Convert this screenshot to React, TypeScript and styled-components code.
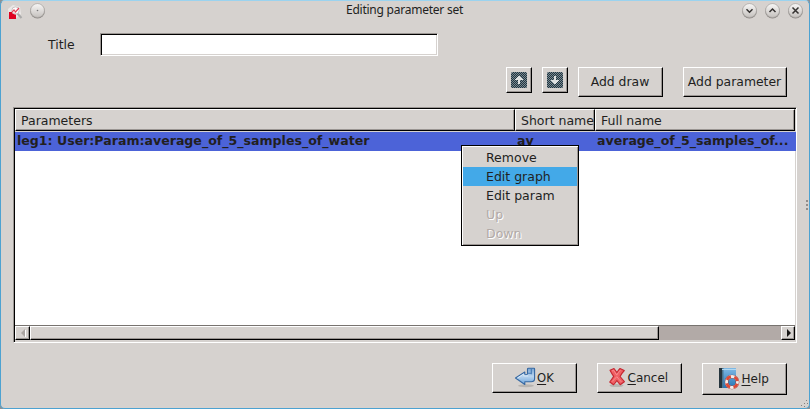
import React from "react";
import styled, { createGlobalStyle, css } from "styled-components";

const Global = createGlobalStyle`
  * { box-sizing: border-box; }
  html, body { margin: 0; background: #8b9297; overflow: hidden; }
  body { font: 13px/19px "DejaVu Sans", sans-serif; color: #221f1e; }
`;

const face = "#d6d2cf";
const shade = "#9b9693";

const raised = css`
  background: ${face};
  border: 1px solid #fff;
  border-right-color: #000;
  border-bottom-color: #000;
  box-shadow: inset -1px -1px ${shade};
`;

const Window = styled.main`
  position: relative;
  display: flex;
  flex-direction: column;
  width: 810px;
  height: 409px;
  background: ${face};
  border: 1px solid #4da2d1;
  border-top-color: #9bd3ef;
  border-radius: 5px;
`;

const TitleBar = styled.header`
  display: grid;
  grid-template-columns: 60px 1fr 60px;
  height: 32px;
  flex: none;
  align-items: start;
`;

const TitleIcons = styled.div<{ $end?: boolean }>`
  display: flex;
  gap: ${(p) => (p.$end ? 7 : 6)}px;
  padding-top: 1px;
  padding-left: ${(p) => (p.$end ? 0 : 6)}px;
  margin-left: ${(p) => (p.$end ? -8 : 0)}px;
  height: 20px;
  svg { flex: none; display: block; }
`;

const TitleText = styled.h1`
  margin: 0;
  padding-right: 1px;
  text-align: center;
  font: 12px/18px "Noto Sans", sans-serif;
  letter-spacing: -0.24px;
`;

const TitleRow = styled.label`
  display: flex;
  height: 23px;
  flex: none;
  padding-left: 47px;
`;

const TitleLabel = styled.span`
  width: 52px;
  line-height: 23px;
  font-size: 12.4px;
`;

const TextInput = styled.input`
  width: 338px;
  height: 23px;
  padding: 0 4px;
  border: 1px solid #fff;
  border-top-color: ${shade};
  border-left-color: ${shade};
  box-shadow: inset 1px 1px #000, inset -1px -1px ${face};
  border-radius: 0;
  outline: none;
  font: inherit;
`;

const Toolbar = styled.div`
  display: flex;
  gap: 10px;
  height: 30px;
  flex: none;
  margin: 11px 0 10px 505px;
`;

const Button = styled.button<{ $w: number; $h?: number; $last?: boolean }>`
  ${raised}
  display: flex;
  align-items: center;
  justify-content: center;
  width: ${(p) => p.$w}px;
  height: ${(p) => p.$h ?? 30}px;
  padding: 0 1px 0 0;
  margin-left: ${(p) => (p.$last ? 10 : 0)}px;
  border-radius: 0;
  font: 12.4px/18px "DejaVu Sans", sans-serif;
  color: inherit;
  white-space: nowrap;
  svg { flex: none; display: block; }
`;

const Table = styled.section`
  display: flex;
  flex-direction: column;
  width: 784px;
  height: 236px;
  flex: none;
  margin-left: 12px;
  background: #fff;
  border: 1px solid #fff;
  border-top-color: ${shade};
  border-left-color: ${shade};
  box-shadow: inset 1px 1px #000, inset -1px -1px ${face};
  padding: 1px;
`;

const HeaderRow = styled.div`
  display: grid;
  grid-template-columns: 500px 80px 200px;
  height: 23px;
  flex: none;
  border-bottom: 1px solid ${face};
`;

const HeaderCell = styled.div`
  ${raised}
  overflow: hidden;
  white-space: nowrap;
  padding: 2px 0 0 5px;
  font-size: 12.5px;
  line-height: 18px;
`;

const DataRow = styled.div`
  display: grid;
  grid-template-columns: 500px 80px 200px;
  width: 781px;
  height: 19px;
  flex: none;
  background: #4c63d8;
  font-weight: bold;
  font-size: 12.57px;
  line-height: 18px;
`;

const DataCell = styled.div`
  padding-left: 2px;
  white-space: nowrap;
`;

const Blank = styled.div`
  flex: 1;
`;

const Scrollbar = styled.div`
  display: flex;
  height: 16px;
  flex: none;
  border-top: 1px solid #77736f;
  border-bottom: 1px solid ${face};
  background: #b2aaa7;
`;

const ScrollPart = styled.div<{ $w: number }>`
  ${raised}
  display: flex;
  align-items: center;
  justify-content: center;
  width: ${(p) => p.$w}px;
  height: 14px;
`;

const Trough = styled.div`
  flex: 1;
`;

const Footer = styled.footer`
  display: flex;
  gap: 20px;
  margin: 20px 0 0 491px;
`;

const ButtonText = styled.span<{ $w: number; $gap?: number; $size?: number }>`
  width: ${(p) => p.$w}px;
  margin-left: ${(p) => p.$gap ?? 0}px;
  font-size: ${(p) => p.$size ?? 12}px;
  text-align: left;
  u { text-underline-offset: 2px; text-decoration-skip-ink: none; }
`;

const Menu = styled.div`
  position: absolute;
  left: 460px;
  top: 144px;
  width: 118px;
  height: 101px;
  padding: 2px 1px;
  border: 1px solid #000;
  background: ${face};
  box-shadow: inset 1px 1px #fff, inset -1px -1px ${shade};
`;

const MenuItem = styled.div<{ $active?: boolean; $disabled?: boolean }>`
  height: 19px;
  padding-left: 23px;
  font-size: 12.5px;
  line-height: 19px;
  background: ${(p) => (p.$active ? "#43a9e8" : "transparent")};
  color: ${(p) => (p.$disabled ? "#b2aaa7" : "inherit")};
  text-shadow: ${(p) => (p.$disabled ? "1px 1px #fff" : "none")};
`;

const SideGrip = styled.svg`
  position: absolute;
  right: 0;
  top: 199px;
`;

const CornerGrip = styled.svg`
  position: absolute;
  right: 0;
  bottom: 0;
`;

function Orb({ kind }: { kind: "dot" | "down" | "up" | "close" }) {
  return (
    <svg width="16" height="18" viewBox="0 0 16 18">
      <defs>
        <linearGradient id={`orb-${kind}`} x2="0" y2="1">
          <stop stopColor="#f8f7f6" />
          <stop offset="1" stopColor="#c5c1be" />
        </linearGradient>
      </defs>
      <circle cx="8.5" cy="9" r="7.4" fill="#8d8986" />
      <circle cx="8.5" cy="8.5" r="6.9" fill={`url(#orb-${kind})`} stroke="#aaa6a3" strokeWidth=".6" />
      {kind === "dot" && <circle cx="8.5" cy="8.5" r=".8" fill="#777" />}
      {kind !== "dot" && (
        <path
          d={
            kind === "down"
              ? "M5.5 7.3 8.5 10.3 11.5 7.3"
              : kind === "up"
                ? "M5.5 10 8.5 7 11.5 10"
                : "M5.5 5.5 11.5 11.5M11.5 5.5 5.5 11.5"
          }
          fill="none"
          stroke="#353231"
          strokeWidth="1.5"
        />
      )}
    </svg>
  );
}

function AppIcon() {
  return (
    <svg width="16" height="18" viewBox="0 0 16 18">
      <path d="m1 7 5-4 7 2 1 7-6 5-6-3z" fill="#ebe8e7" />
      <path d="M2 10h7v7H2z" fill="#df001f" />
      <path d="m10 11 4.5 5" stroke="#aaa" strokeWidth="2" />
      <circle cx="8.5" cy="8.5" r="3.7" fill="#fff" fillOpacity=".85" stroke="#c9c2c2" />
      <path d="m5 10 2-2 1.5 2L12 6" fill="none" stroke="#e24255" strokeWidth="1.2" />
    </svg>
  );
}

function ArrowIcon({ down }: { down?: boolean }) {
  const id = down ? "dither-down" : "dither-up";
  return (
    <svg width="16" height="16" viewBox="0 0 16 16">
      <defs>
        <pattern id={id} width="2" height="2" patternUnits="userSpaceOnUse">
          <path d="M0 0h1v1H0zM1 1h1v1H1z" fill="#213540" shapeRendering="crispEdges" />
          <path d="M1 0h1v1H1zM0 1h1v1H0z" fill="#798991" shapeRendering="crispEdges" />
        </pattern>
      </defs>
      <rect width="16" height="16" rx="1.5" fill={`url(#${id})`} />
      <path
        d={down ? "M7 4h2v4h3v1h-1v1h-1v1H9v1H7v-1H6v-1H5V9H4V8h3z" : "M7 4h2v1h1v1h1v1h1v1H9v4H7V8H4V7h1V6h1V5h1z"}
        fill="#dfe2e2"
        shapeRendering="crispEdges"
      />
    </svg>
  );
}

function OkIcon() {
  return (
    <svg width="22" height="22" viewBox="0 0 22 22">
      <defs>
        <linearGradient id="enter" x2="0" y2="1">
          <stop stopColor="#78a4d2" />
          <stop offset=".5" stopColor="#b9d4ee" />
          <stop offset="1" stopColor="#6aa3db" />
        </linearGradient>
      </defs>
      <ellipse cx="12" cy="18.8" rx="8" ry="1.5" fill="#8a8683" opacity=".4" />
      <path
        d="M13.5 2q0-.8 1-.8H20q.6 0 .6.8v9.5q0 3.3-3.5 3.3h-6.3v2.7L1.5 11l9.3-6v2.8h1.4q1.3 0 1.3-1.2z"
        fill="url(#enter)"
        stroke="#3668a2"
        strokeWidth="1.1"
        strokeLinejoin="round"
      />
      <path d="M14 6.2h3.3V2M17.3 6.2v1" fill="none" stroke="#4579b3" strokeWidth="1.1" />
      <path d="m3.4 11 6.4-4.1v2h4.4" fill="none" stroke="#e2effb" strokeWidth=".9" />
    </svg>
  );
}

function CancelIcon() {
  return (
    <svg width="18" height="22" viewBox="0 0 18 22">
      <ellipse cx="8.5" cy="18.6" rx="7" ry="1.5" fill="#8a8683" opacity=".4" />
      <path
        d="m2 3.2 4-1.7Q7.5 3.2 9 5.8q1.2-2.6 3-4.3l4.3 2q-2.5 2.6-4.2 6 2.2 2.7 4.3 5.2l-4.2 3q-1.7-1.8-3.3-4.2-1.6 2.6-3.3 4.2L1.7 15q2.2-2.6 4-5.6Q3.5 6.2 2 3.2z"
        fill="#ef5f63"
        stroke="#c52731"
        strokeWidth="1.1"
        strokeLinejoin="round"
      />
      <path d="m4 4.1 1.5-.8Q7 5.3 8.7 8.1q1.6-3 3.7-5M4.2 14.5Q6.5 12 8.8 9.7q2.3 3 4.6 5.2" fill="none" stroke="#fb9295" strokeWidth=".9" />
    </svg>
  );
}

function HelpIcon() {
  return (
    <svg width="22" height="22" viewBox="0 0 22 22">
      <defs>
        <linearGradient id="book" x2="0" y2="1">
          <stop stopColor="#80b9e5" />
          <stop offset="1" stopColor="#2476b6" />
        </linearGradient>
      </defs>
      <path d="M0 0h17v20H0z" fill="url(#book)" />
      <path d="M0 0h3v20H0z" fill="#26353e" />
      <path d="M3 0h1.5v20H3z" fill="#4b748f" />
      <path d="M3 1.5h14" stroke="#b1d8f1" />
      <circle cx="13" cy="14" r="5.5" fill="none" stroke="#8e3630" strokeWidth="3.6" />
      <circle cx="13" cy="14" r="5.5" fill="none" stroke="#f4eeeb" strokeWidth="2.8" />
      <circle
        cx="13"
        cy="14"
        r="5.5"
        fill="none"
        stroke="#dc4937"
        strokeWidth="2.8"
        strokeDasharray="5.04 3.6"
        strokeDashoffset="-1.8"
      />
    </svg>
  );
}

export default function App() {
  return (
    <>
      <Global />
      <Window>
        <TitleBar>
          <TitleIcons><AppIcon /><Orb kind="dot" /></TitleIcons>
          <TitleText>Editing parameter set</TitleText>
          <TitleIcons $end><Orb kind="down" /><Orb kind="up" /><Orb kind="close" /></TitleIcons>
        </TitleBar>
        <TitleRow><TitleLabel>Title</TitleLabel><TextInput /></TitleRow>
        <Toolbar>
          <Button $w={26} $h={26} aria-label="Move up"><ArrowIcon /></Button>
          <Button $w={26} $h={26} aria-label="Move down"><ArrowIcon down /></Button>
          <Button $w={85}>Add draw</Button>
          <Button $w={104} $last>Add parameter</Button>
        </Toolbar>
        <Table>
          <HeaderRow>
            <HeaderCell>Parameters</HeaderCell>
            <HeaderCell>Short name</HeaderCell>
            <HeaderCell>Full name</HeaderCell>
          </HeaderRow>
          <DataRow>
            <DataCell>leg1: User:Param:average_of_5_samples_of_water</DataCell>
            <DataCell>av</DataCell>
            <DataCell>average_of_5_samples_of...</DataCell>
          </DataRow>
          <Blank />
          <Scrollbar>
            <ScrollPart $w={15}>
              <svg width="6" height="8"><path d="M5 0v8L1 4z" fill="#aaa4a1" /><path d="M5.5 1v7" stroke="#fff" /></svg>
            </ScrollPart>
            <ScrollPart $w={629} />
            <Trough />
            <ScrollPart $w={14}>
              <svg width="5" height="8"><path d="M1 0v8l4-4z" fill="#171514" /></svg>
            </ScrollPart>
          </Scrollbar>
        </Table>
        <Footer>
          <Button $w={85}><OkIcon /><ButtonText $w={17} $gap={1} $size={11.6}><u>O</u>K</ButtonText></Button>
          <Button $w={85}><CancelIcon /><ButtonText $w={43} $gap={2}><u>C</u>ancel</ButtonText></Button>
          <Button $w={85} $h={32}><HelpIcon /><ButtonText $w={28} $gap={1}><u>H</u>elp</ButtonText></Button>
        </Footer>
        <Menu>
          <MenuItem>Remove</MenuItem>
          <MenuItem $active>Edit graph</MenuItem>
          <MenuItem>Edit param</MenuItem>
          <MenuItem $disabled>Up</MenuItem>
          <MenuItem $disabled>Down</MenuItem>
        </Menu>
        <SideGrip width="3" height="10"><path d="M0 0h2v2H0zM0 4h2v2H0zM0 8h2v2H0z" fill="#918d8a" /></SideGrip>
        <CornerGrip width="8" height="8"><path d="M5 0h1v1H5zM3 3h1v1H3zM6 3h1v1H6zM0 5h1v1H0zM3 6h1v1H3z" fill="#85817e" /></CornerGrip>
      </Window>
    </>
  );
}
